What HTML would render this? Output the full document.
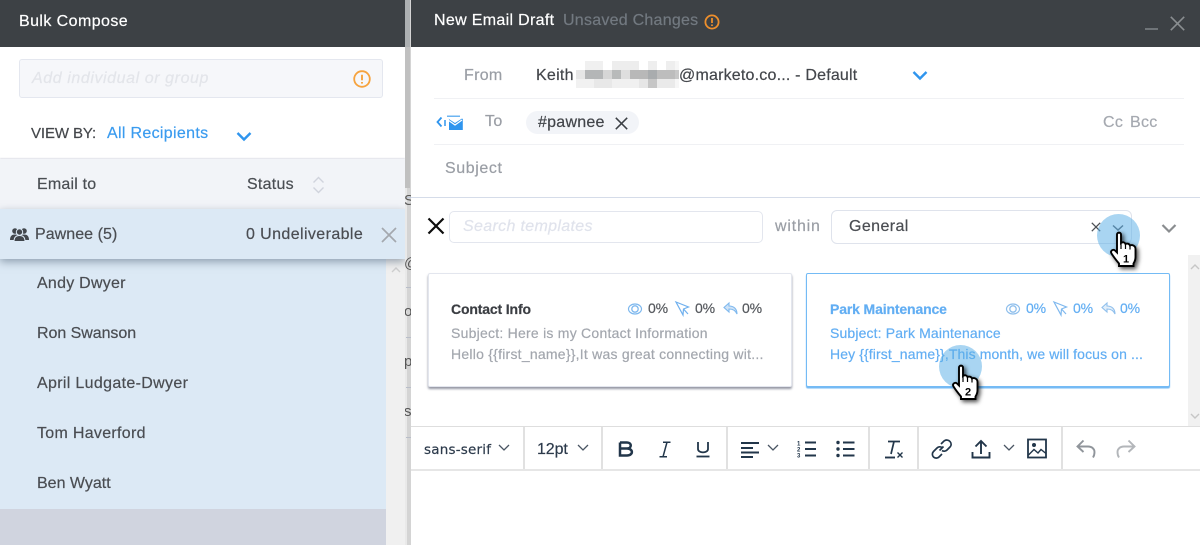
<!DOCTYPE html>
<html><head><meta charset="utf-8">
<style>
html,body{margin:0;padding:0;background:#fff}
#p{position:relative;width:1200px;height:545px;overflow:hidden;background:#fff;font-family:"Liberation Sans",sans-serif;color:#4a4d52;filter:blur(.3px)}
.a{position:absolute}
.t{position:absolute;white-space:nowrap;line-height:20px;font-size:16px;-webkit-text-stroke:.2px currentColor}
svg{position:absolute;overflow:visible}
.sep{position:absolute;width:2px;background:#e1e1e1;top:427px;height:42px}
.f{position:absolute;left:405px;width:6px;height:22px;overflow:hidden}
.f span{position:absolute;left:-1px;top:0;font-size:15px;line-height:22px;color:#555}
</style></head><body><div id="p">

<!-- left panel -->
<div class="a" style="left:0;top:0;width:406px;height:545px;background:#fff"></div>
<div class="a" style="left:0;top:0;width:406px;height:47px;background:#3d4145"></div>
<div class="t" style="left:19px;top:12px;color:#fff;letter-spacing:.42px">Bulk Compose</div>
<div class="a" style="left:19px;top:59px;width:362px;height:37px;background:#f6f7fa;border:1px solid #e4e7ef;border-radius:3px"></div>
<div class="t" style="left:32px;top:69px;color:#e3e5ea;font-style:italic;letter-spacing:.58px">Add individual or group</div>
<svg style="left:353px;top:70px" width="18" height="18" viewBox="0 0 18 18"><circle cx="9" cy="9" r="7.8" fill="none" stroke="#f6a33e" stroke-width="1.8"/><path d="M9 4.8V10.2M9 12V13.6" stroke="#f6a33e" stroke-width="1.9" fill="none"/></svg>
<div class="t" style="left:31px;top:124px;color:#44474b;font-size:15px;letter-spacing:-.1px">VIEW BY:</div>
<div class="t" style="left:107px;top:124px;color:#3a9bef;letter-spacing:.32px">All Recipients</div>
<svg style="left:236px;top:131px" width="16" height="11" viewBox="0 0 16 11"><path d="M1.5 2L8 8.5L14.5 2" stroke="#2f95ee" stroke-width="2.4" fill="none"/></svg>

<div class="a" style="left:0;top:159px;width:405px;height:50px;background:#f2f4f8;box-shadow:0 -1px 1px #e2e4ea"></div>
<div class="t" style="left:37px;top:175px;color:#4a4e53;letter-spacing:.2px">Email to</div>
<div class="t" style="left:247px;top:175px;color:#4a4e53;letter-spacing:.25px">Status</div>
<svg style="left:312px;top:176px" width="13" height="18" viewBox="0 0 13 18"><path d="M1.5 6.5L6.5 1.5L11.5 6.5M1.5 11.5L6.5 16.5L11.5 11.5" stroke="#d0d4dd" stroke-width="1.4" fill="none"/></svg>

<!-- list -->
<div class="a" style="left:0;top:259px;width:386px;height:250px;background:#dce9f5"></div>
<div class="a" style="left:0;top:509px;width:386px;height:36px;background:#d0d4df"></div>
<div class="a" style="left:386px;top:259px;width:20px;height:286px;background:#f0f0f0"></div>
<svg style="left:391px;top:266px" width="10" height="7" viewBox="0 0 10 7"><path d="M1 6L5 2L9 6" stroke="#cfcfcf" stroke-width="1.4" fill="none"/></svg>
<div class="t" style="left:37px;top:274px;letter-spacing:.25px">Andy Dwyer</div>
<div class="t" style="left:37px;top:324px;letter-spacing:-.05px">Ron Swanson</div>
<div class="t" style="left:37px;top:374px;letter-spacing:.33px">April Ludgate-Dwyer</div>
<div class="t" style="left:37px;top:424px;letter-spacing:.3px">Tom Haverford</div>
<div class="t" style="left:37px;top:474px;letter-spacing:0">Ben Wyatt</div>

<div class="a" style="left:0;top:209px;width:405px;height:50px;background:#dce9f5;box-shadow:0 3px 8px rgba(70,90,110,.5)"></div>
<svg style="left:10px;top:226px" width="19" height="16" viewBox="0 0 19 16"><g fill="#41464c"><circle cx="5" cy="5" r="2.8"/><circle cx="14" cy="5" r="2.8"/><path d="M0 14C0 10 2 8.5 5 8.5S9 10 9 12.5V14Z"/><path d="M19 14C19 10 17 8.5 14 8.5S10 10 10 12.5V14Z"/><circle cx="9.5" cy="6" r="3.2" stroke="#dce9f5" stroke-width="1"/><path d="M4 15.5C4 11 6.500 9.500 9.500 9.500S15 11 15 15.500Z" stroke="#dce9f5" stroke-width="1"/></g></svg>
<div class="t" style="left:35px;top:225px;letter-spacing:.05px">Pawnee (5)</div>
<div class="t" style="left:246px;top:225px;letter-spacing:.4px">0 Undeliverable</div>
<svg style="left:381px;top:227px" width="16" height="16" viewBox="0 0 16 16"><path d="M1 1L15 15M15 1L1 15" stroke="#a4a8ae" stroke-width="1.7" fill="none"/></svg>

<!-- gap strip -->
<div class="a" style="left:405px;top:0;width:6px;height:545px;background:#d4d4d4"></div>
<div class="a" style="left:405px;top:0;width:2px;height:545px;background:#e9e9e9"></div>
<div class="a" style="left:405px;top:0;width:5px;height:188px;background:#c0c0c0"></div>
<div class="a" style="left:405px;top:0;width:5px;height:47px;background:#adb0b2"></div>
<div class="a" style="left:407px;top:197px;width:4px;height:1px;background:#bfc8d8"></div>
<div class="a" style="left:406px;top:287px;width:5px;height:1px;background:#b9bec9"></div>
<div class="a" style="left:406px;top:337px;width:5px;height:1px;background:#b9bec9"></div>
<div class="a" style="left:406px;top:387px;width:5px;height:1px;background:#b9bec9"></div>
<div class="a" style="left:406px;top:437px;width:5px;height:1px;background:#b9bec9"></div>
<div class="f" style="top:190px"><span>S</span></div>
<div class="f" style="top:253px"><span>@</span></div>
<div class="f" style="top:301px"><span>o</span></div>
<div class="f" style="top:351px"><span>p</span></div>
<div class="f" style="top:401px"><span>s</span></div>

<!-- right panel -->
<div class="a" style="left:411px;top:0;width:789px;height:545px;background:#fff"></div>
<div class="a" style="left:411px;top:0;width:789px;height:47px;background:#3d4145"></div>
<div class="t" style="left:434px;top:11px;color:#fff;letter-spacing:.32px">New Email Draft</div>
<div class="t" style="left:563px;top:11px;color:#727980;letter-spacing:.25px">Unsaved Changes</div>
<svg style="left:704px;top:14px" width="16" height="16" viewBox="0 0 16 16"><circle cx="8" cy="8" r="6.6" fill="none" stroke="#ee8f2c" stroke-width="1.8"/><path d="M8 4V9M8 10.500V12" stroke="#ee8f2c" stroke-width="1.8" fill="none"/></svg>
<div class="a" style="left:1145px;top:28px;width:13px;height:2px;background:#6f7478"></div>
<svg style="left:1170px;top:16px" width="15" height="15" viewBox="0 0 15 15"><path d="M.8 .8L14.200 14.200M14.200 .8L.8 14.200" stroke="#8a8e91" stroke-width="1.600" fill="none"/></svg>

<div class="t" style="left:464px;top:66px;color:#9a9ea5;letter-spacing:.3px">From</div>
<div class="t" style="left:536px;top:66px;color:#43464b;letter-spacing:.25px">Keith</div>
<svg style="left:576px;top:61px" width="103" height="27" viewBox="0 0 103 27" shape-rendering="crispEdges">
<rect width="103" height="27" x="0" y="0" fill="#f6f6f6"/>
<rect x="0" y="0" width="9" height="9" fill="#fff"/><rect x="9" y="0" width="18" height="9" fill="#f0f0f0"/><rect x="27" y="0" width="9" height="9" fill="#fff"/><rect x="36" y="0" width="27" height="9" fill="#ededed"/><rect x="63" y="0" width="9" height="9" fill="#fff"/><rect x="72" y="0" width="9" height="9" fill="#eee"/><rect x="81" y="0" width="9" height="9" fill="#fff"/><rect x="90" y="0" width="9" height="9" fill="#eee"/>
<rect x="0" y="9" width="9" height="9" fill="#e6e6e6"/><rect x="9" y="9" width="18" height="9" fill="#b4b6b7"/><rect x="27" y="9" width="9" height="9" fill="#d6d6d6"/><rect x="36" y="9" width="9" height="9" fill="#b8baba"/><rect x="45" y="9" width="9" height="9" fill="#dedede"/><rect x="54" y="9" width="18" height="9" fill="#b8b8b8"/><rect x="72" y="9" width="9" height="9" fill="#a9acae"/><rect x="81" y="9" width="18" height="9" fill="#bdbdbd"/><rect x="99" y="9" width="4" height="9" fill="#c8c8c8"/>
<rect x="0" y="18" width="18" height="9" fill="#f1f1f1"/><rect x="18" y="18" width="18" height="9" fill="#e8e8e8"/><rect x="36" y="18" width="27" height="9" fill="#f0f0f0"/><rect x="63" y="18" width="9" height="9" fill="#e6e6e6"/><rect x="72" y="18" width="9" height="9" fill="#c6c6c6"/><rect x="81" y="18" width="18" height="9" fill="#eaeaea"/>
</svg>
<div class="t" style="left:679px;top:66px;color:#43464b;letter-spacing:.2px">@marketo.co... - Default</div>
<svg style="left:912px;top:70px" width="16" height="11" viewBox="0 0 16 11"><path d="M1.500 2L8 8.500L14.500 2" stroke="#2f95ee" stroke-width="2.400" fill="none"/></svg>
<div class="a" style="left:434px;top:98px;width:750px;height:1px;background:#f0f1f4"></div>

<svg style="left:436px;top:114px" width="28" height="17" viewBox="0 0 28 17"><path d="M5.500 3.500L1.500 8L5.500 12.500" stroke="#2f95ee" stroke-width="1.800" fill="none"/><path d="M9 6V12" stroke="#2f95ee" stroke-width="1.500"/><path d="M11 1.500H24V3H11Z" fill="#6db5f2"/><path d="M11 4.500L18 9L25 4.500L25.800 5V16H12V5Z" fill="#2f95ee" transform="translate(1 0)"/><path d="M12 6L19 11L26 6" stroke="#fff" stroke-width="1.200" fill="none"/></svg>
<div class="t" style="left:485px;top:112px;color:#9a9ea5;letter-spacing:.4px">To</div>
<div class="a" style="left:526px;top:111px;width:113px;height:23px;background:#f2f4f8;border-radius:12px"></div>
<div class="t" style="left:538px;top:113px;color:#42454a;letter-spacing:.25px">#pawnee</div>
<svg style="left:615px;top:117px" width="13" height="13" viewBox="0 0 13 13"><path d="M.8 .8L12.200 12.200M12.200 .8L.8 12.200" stroke="#3b3f44" stroke-width="1.500" fill="none"/></svg>
<div class="t" style="left:1103px;top:113px;color:#a5a9b0;letter-spacing:.3px">Cc</div>
<div class="t" style="left:1130px;top:113px;color:#a5a9b0;letter-spacing:.3px">Bcc</div>
<div class="a" style="left:434px;top:144px;width:750px;height:1px;background:#f0f1f4"></div>
<div class="t" style="left:445px;top:159px;color:#9a9ea5;letter-spacing:.6px">Subject</div>
<div class="a" style="left:411px;top:197px;width:789px;height:1px;background:#d5dce9"></div>

<svg style="left:427px;top:217px" width="18" height="18" viewBox="0 0 18 18"><path d="M1.500 1.500L16.500 16.500M16.500 1.500L1.500 16.500" stroke="#0d0d0d" stroke-width="2.200" fill="none"/></svg>
<div class="a" style="left:449px;top:211px;width:312px;height:30px;border:1px solid #e3e6ee;border-radius:5px"></div>
<div class="t" style="left:463px;top:217px;color:#e0e3ec;font-style:italic;letter-spacing:.33px">Search templates</div>
<div class="t" style="left:775px;top:217px;color:#9a9ea5;letter-spacing:.8px">within</div>
<div class="a" style="left:831px;top:210px;width:299px;height:32px;border:1px solid #dfe3ec;border-radius:6px"></div>
<div class="t" style="left:849px;top:217px;color:#4a4d52;letter-spacing:.4px">General</div>
<svg style="left:1091px;top:222px" width="10" height="10" viewBox="0 0 10 10"><path d="M.8 .8L9.200 9.200M9.200 .8L.8 9.200" stroke="#4d5156" stroke-width="1.300" fill="none"/></svg>
<svg style="left:1112px;top:224px" width="12" height="8" viewBox="0 0 12 8"><path d="M1 1.500L6 6L11 1.500" stroke="#545a60" stroke-width="1.500" fill="none"/></svg>
<svg style="left:1161px;top:223px" width="16" height="11" viewBox="0 0 16 11"><path d="M1.500 2L8 8.500L14.500 2" stroke="#8a8d90" stroke-width="2.200" fill="none"/></svg>

<!-- scrollbar -->
<div class="a" style="left:1188px;top:255px;width:12px;height:172px;background:#f1f1f1"></div>
<svg style="left:1190px;top:263px" width="10" height="7" viewBox="0 0 10 7"><path d="M1 6L5 2L9 6" stroke="#c6c6c6" stroke-width="1.400" fill="none"/></svg>
<svg style="left:1190px;top:413px" width="10" height="7" viewBox="0 0 10 7"><path d="M1 1L5 5L9 1" stroke="#c6c6c6" stroke-width="1.400" fill="none"/></svg>

<!-- card 1 -->
<div class="a" style="left:428px;top:273px;width:362px;height:112px;background:#fff;border:1px solid #e3e6ee;border-radius:2px;box-shadow:0 2px 2px rgba(90,95,115,.65)"></div>
<div class="t" style="left:451px;top:299px;font-size:14px;font-weight:bold;color:#3b3e43;letter-spacing:-.15px">Contact Info</div>
<svg style="left:628px;top:302px" width="14" height="14" viewBox="0 0 14 14"><ellipse cx="7" cy="7" rx="6.500" ry="5" fill="none" stroke="#7eb8ee" stroke-width="1.200"/><circle cx="7" cy="7" r="3.200" fill="none" stroke="#7eb8ee" stroke-width="1.300"/></svg>
<div class="t" style="left:648px;top:298px;font-size:14px;color:#55585d;letter-spacing:-.1px">0%</div>
<svg style="left:675px;top:301px" width="15" height="15" viewBox="0 0 15 15"><path d="M1 1L13.500 6L8.500 8L8 14Z M8.500 8L13 13" fill="none" stroke="#6fb0ee" stroke-width="1.200"/></svg>
<div class="t" style="left:695px;top:298px;font-size:14px;color:#55585d;letter-spacing:-.1px">0%</div>
<svg style="left:723px;top:302px" width="15" height="13" viewBox="0 0 15 13"><path d="M6 1L1 5.500L6 10V7C10 7 12.500 8.500 14 12C14 7 11 4 6 4Z" fill="#cfe3f7" stroke="#7eb8ee" stroke-width="1.100"/></svg>
<div class="t" style="left:742px;top:298px;font-size:14px;color:#55585d;letter-spacing:-.1px">0%</div>
<div class="t" style="left:451px;top:323px;font-size:14px;color:#a3a7ae;letter-spacing:.24px">Subject: Here is my Contact Information</div>
<div class="t" style="left:451px;top:344px;font-size:14px;color:#a3a7ae;letter-spacing:.24px">Hello {{first_name}},It was great connecting wit...</div>

<!-- card 2 -->
<div class="a" style="left:806px;top:273px;width:362px;height:112px;background:#fff;border:1px solid #74bbf5;border-radius:2px;box-shadow:0 1.500px 1px #72b9f4"></div>
<div class="t" style="left:830px;top:299px;font-size:14px;font-weight:bold;color:#62aef3;letter-spacing:-.14px">Park Maintenance</div>
<svg style="left:1006px;top:302px" width="14" height="14" viewBox="0 0 14 14"><ellipse cx="7" cy="7" rx="6.500" ry="5" fill="none" stroke="#8fbfec" stroke-width="1.200"/><circle cx="7" cy="7" r="3.200" fill="none" stroke="#8fbfec" stroke-width="1.300"/></svg>
<div class="t" style="left:1026px;top:298px;font-size:14px;color:#62aef3;letter-spacing:-.1px">0%</div>
<svg style="left:1053px;top:301px" width="15" height="15" viewBox="0 0 15 15"><path d="M1 1L13.500 6L8.500 8L8 14Z M8.500 8L13 13" fill="none" stroke="#7fb8ee" stroke-width="1.200"/></svg>
<div class="t" style="left:1073px;top:298px;font-size:14px;color:#62aef3;letter-spacing:-.1px">0%</div>
<svg style="left:1101px;top:302px" width="15" height="13" viewBox="0 0 15 13"><path d="M6 1L1 5.500L6 10V7C10 7 12.500 8.500 14 12C14 7 11 4 6 4Z" fill="#e3effa" stroke="#8fbfec" stroke-width="1.100"/></svg>
<div class="t" style="left:1120px;top:298px;font-size:14px;color:#62aef3;letter-spacing:-.1px">0%</div>
<div class="t" style="left:830px;top:323px;font-size:14px;color:#62aef3;letter-spacing:.14px">Subject: Park Maintenance</div>
<div class="t" style="left:830px;top:344px;font-size:14px;color:#62aef3;letter-spacing:.11px">Hey {{first_name}},This month, we will focus on ...</div>

<!-- toolbar -->
<div class="a" style="left:411px;top:426px;width:789px;height:1px;background:#dedede"></div>
<div class="a" style="left:411px;top:469px;width:789px;height:2px;background:#e6e6e6"></div>
<div class="sep" style="left:523px"></div><div class="sep" style="left:601px"></div><div class="sep" style="left:726px"></div><div class="sep" style="left:868px"></div><div class="sep" style="left:917px"></div><div class="sep" style="left:1061px"></div>
<div class="t" style="left:424px;top:440px;color:#2c3a4b;font-family:'DejaVu Sans',sans-serif;font-size:13.500px;letter-spacing:.2px">sans-serif</div>
<svg style="left:498px;top:444px" width="12" height="8" viewBox="0 0 12 8"><path d="M1 1L6 6L11 1" stroke="#4a5563" stroke-width="1.300" fill="none"/></svg>
<div class="t" style="left:537px;top:440px;color:#2c3a4b;letter-spacing:-.1px">12pt</div>
<svg style="left:577px;top:444px" width="12" height="8" viewBox="0 0 12 8"><path d="M1 1L6 6L11 1" stroke="#4a5563" stroke-width="1.300" fill="none"/></svg>
<svg style="left:618px;top:441px" width="16" height="16" viewBox="0 0 16 16"><path d="M2 1.500H9C14 1.500 14 7.500 9 7.500H2M9 7.500C15.500 7.500 15.500 14.500 9 14.500H2V1.500" fill="none" stroke="#22364a" stroke-width="2.500"/></svg>
<svg style="left:658px;top:441px" width="14" height="17" viewBox="0 0 14 17"><path d="M5 1.200H12.500M1.500 15.800H9M9 1.200L5 15.800" fill="none" stroke="#22364a" stroke-width="1.500"/></svg>
<svg style="left:696px;top:441px" width="14" height="17" viewBox="0 0 14 17"><path d="M2 1V8C2 12.500 12 12.500 12 8V1" fill="none" stroke="#22364a" stroke-width="1.800"/><path d="M.5 15.500H13.500" stroke="#22364a" stroke-width="1.800"/></svg>
<svg style="left:741px;top:441px" width="19" height="17" viewBox="0 0 19 17"><path d="M0 2H18M0 7H12M0 11.500H18M0 16H12" stroke="#22364a" stroke-width="1.900"/></svg>
<svg style="left:767px;top:444px" width="12" height="8" viewBox="0 0 12 8"><path d="M1 1L6 6L11 1" stroke="#4a5563" stroke-width="1.300" fill="none"/></svg>
<svg style="left:797px;top:440px" width="19" height="18" viewBox="0 0 19 18"><path d="M8 2.500H19M8 9H19M8 15.500H19" stroke="#22364a" stroke-width="1.900"/><text x="0" y="5.500" font-size="6" font-weight="bold" fill="#22364a" font-family="Liberation Sans">1</text><text x="0" y="11.500" font-size="6" font-weight="bold" fill="#22364a" font-family="Liberation Sans">2</text><text x="0" y="17.500" font-size="6" font-weight="bold" fill="#22364a" font-family="Liberation Sans">3</text></svg>
<svg style="left:836px;top:440px" width="19" height="18" viewBox="0 0 19 18"><path d="M7 2.500H18.500M7 9H18.500M7 15.500H18.500" stroke="#22364a" stroke-width="1.900"/><circle cx="2" cy="2.500" r="1.700" fill="#22364a"/><circle cx="2" cy="9" r="1.700" fill="#22364a"/><circle cx="2" cy="15.500" r="1.700" fill="#22364a"/></svg>
<svg style="left:884px;top:440px" width="20" height="19" viewBox="0 0 20 19"><path d="M4 1.500H16M10 1.500L7 14" stroke="#22364a" stroke-width="1.700" fill="none"/><path d="M1 17.500H11" stroke="#22364a" stroke-width="1.900"/><path d="M13.500 12.500L18.500 17.500M18.500 12.500L13.500 17.500" stroke="#22364a" stroke-width="1.400"/></svg>
<svg style="left:931px;top:439px" width="21" height="20" viewBox="0 0 21 20"><path d="M8.500 11.500L12.500 7.500M10 5L13 2C15 .5 17.500 .8 19 2.500C20.500 4.200 20.500 6.500 19 8L16 11C14.500 12.500 12.500 12.500 11 11.500M11 8.500C9.500 7.500 7.500 7.500 6 9L2.500 12.500C1 14 1 16.500 2.500 18C4 19.500 6.500 19.500 8 18L11 15" fill="none" stroke="#22364a" stroke-width="1.700"/></svg>
<svg style="left:971px;top:439px" width="20" height="20" viewBox="0 0 20 20"><path d="M10 15V2M4.500 7.500L10 2L15.500 7.500" fill="none" stroke="#22364a" stroke-width="1.900"/><path d="M1.500 13V18.500H18.500V13" fill="none" stroke="#22364a" stroke-width="1.900"/></svg>
<svg style="left:1003px;top:444px" width="12" height="8" viewBox="0 0 12 8"><path d="M1 1L6 6L11 1" stroke="#4a5563" stroke-width="1.300" fill="none"/></svg>
<svg style="left:1027px;top:438px" width="20" height="21" viewBox="0 0 20 21"><rect x="1" y="1.500" width="18" height="18" fill="none" stroke="#22364a" stroke-width="1.800"/><circle cx="7" cy="7" r="2" fill="#22364a"/><path d="M1.500 17L7 11.500L11 15L14 11.500L19 15.500" fill="none" stroke="#22364a" stroke-width="1.400"/></svg>
<svg style="left:1076px;top:439px" width="20" height="20" viewBox="0 0 20 20"><path d="M7.500 1.500L1.500 7.500L7.500 13M2 7.500H12C16 7.500 18.500 10 18.500 13C18.500 15.500 18 17 17 18.500" fill="none" stroke="#90959b" stroke-width="1.900"/></svg>
<svg style="left:1116px;top:439px" width="20" height="20" viewBox="0 0 20 20"><path d="M12.500 1.500L18.500 7.500L12.500 13M18 7.500H8C4 7.500 1.500 10 1.500 13C1.500 15.500 2 17 3 18.500" fill="none" stroke="#b3b6ba" stroke-width="1.900"/></svg>

<!-- pointer 1 -->
<div class="a" style="left:1097px;top:214px;width:43px;height:43px;border-radius:50%;background:rgba(90,175,230,.52)"></div>
<svg style="left:1110px;top:232px;filter:drop-shadow(2px 2px 2px rgba(0,0,0,.7))" width="28" height="36" viewBox="0 0 28 36"><path d="M7 2.500C7 0 11 0 11 2.500V11C13 9.500 15 10.500 15.500 12C17.500 11 19.500 12 20 13.500C22 12.500 25.500 13.500 25.500 17V25C25.500 28 24.500 30 23.500 31.500V34H9V31.500C6 28 4 25.500 1.500 21.500C0 19 3 16.500 5 18.500L7 20.500Z" fill="#fff" stroke="#000" stroke-width="1.900"/><path d="M11 11V17M15.500 12V17M20 13.500V17.500" stroke="#000" stroke-width="1.200" fill="none"/><text x="16" y="30.500" text-anchor="middle" font-size="11" font-weight="bold" fill="#000" font-family="Liberation Sans">1</text></svg>

<!-- pointer 2 -->
<div class="a" style="left:939px;top:345px;width:43px;height:43px;border-radius:50%;background:rgba(90,175,230,.52)"></div>
<svg style="left:952px;top:365px;filter:drop-shadow(2px 2px 2px rgba(0,0,0,.7))" width="28" height="36" viewBox="0 0 28 36"><path d="M7 2.500C7 0 11 0 11 2.500V11C13 9.500 15 10.500 15.500 12C17.500 11 19.500 12 20 13.500C22 12.500 25.500 13.500 25.500 17V25C25.500 28 24.500 30 23.500 31.500V34H9V31.500C6 28 4 25.500 1.500 21.500C0 19 3 16.500 5 18.500L7 20.500Z" fill="#fff" stroke="#000" stroke-width="1.900"/><path d="M11 11V17M15.500 12V17M20 13.500V17.500" stroke="#000" stroke-width="1.200" fill="none"/><text x="16" y="30.500" text-anchor="middle" font-size="11" font-weight="bold" fill="#000" font-family="Liberation Sans">2</text></svg>

</div></body></html>
